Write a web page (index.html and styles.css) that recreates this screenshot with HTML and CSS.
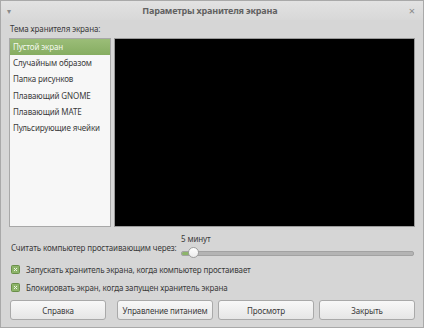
FILE: index.html
```html
<!DOCTYPE html>
<html lang="ru">
<head>
  <meta charset="UTF-8" />
  <title>Параметры хранителя экрана</title>
  <link rel="stylesheet" href="styles.css">
</head>
<body>
  <div class="window">
    <div class="titlebar">
      <span class="menu-arrow">&#9662;</span>
      <span class="title">Параметры хранителя экрана</span>
      <span class="close">&#215;</span>
    </div>

    <div class="content">
      <div class="theme-label">Тема хранителя экрана:</div>

      <div class="main">
        <ul class="themes">
          <li class="selected">Пустой экран</li>
          <li>Случайным образом</li>
          <li>Папка рисунков</li>
          <li>Плавающий GNOME</li>
          <li>Плавающий MATE</li>
          <li>Пульсирующие ячейки</li>
        </ul>
        <div class="preview"></div>
      </div>

      <div class="idle-row">
        <span class="idle-label">Считать компьютер простаивающим через:</span>
        <div class="slider">
          <span class="slider-value">5 минут</span>
          <div class="track">
            <div class="fill"></div>
            <div class="knob"></div>
          </div>
        </div>
      </div>

      <label class="check">
        <svg width="9" height="9" viewBox="0 0 9 9"><rect x="0.5" y="0.5" width="8" height="8" rx="1" fill="#8db46a" stroke="#6a8f4a"/><path d="M3 3 L6 6 M6 3 L3 6" stroke="#eef5e6" stroke-width="1"/></svg>
        Запускать хранитель экрана, когда компьютер простаивает
      </label>
      <label class="check">
        <svg width="9" height="9" viewBox="0 0 9 9"><rect x="0.5" y="0.5" width="8" height="8" rx="1" fill="#8db46a" stroke="#6a8f4a"/><path d="M3 3 L6 6 M6 3 L3 6" stroke="#eef5e6" stroke-width="1"/></svg>
        Блокировать экран, когда запущен хранитель экрана
      </label>

      <div class="buttons">
        <button class="first">Справка</button>
        <button>Управление питанием</button>
        <button>Просмотр</button>
        <button>Закрыть</button>
      </div>
    </div>
  </div>
</body>
</html>
```

FILE: styles.css
```css
body {
  margin: 0;
  font-family: "Noto Sans", "Open Sans", sans-serif;
  font-size: 8px;
  letter-spacing: -0.12px;
  color: #3a3a3a;
}
.window {
  width: 424px;
  height: 328px;
  box-sizing: border-box;
  border: 1px solid #a9a9a9;
  background: #d6d6d6;
}
.titlebar {
  height: 19px;
  display: flex;
  align-items: center;
  justify-content: space-between;
  padding: 0 8px 0 6px;
  background: linear-gradient(#e2e2e2, #d8d8d8);
}
.menu-arrow {
  font-size: 8px;
  color: #8a8a8a;
}
.title {
  font-size: 9px;
  font-weight: bold;
  letter-spacing: -0.2px;
  color: #626262;
}
.close {
  font-size: 11px;
  color: #8a8a8a;
}
.content {
  padding: 0 8px 0 8px;
}
.theme-label {
  height: 17px;
  line-height: 16px;
  padding-top: 1px;
  padding-left: 1px;
}
.main {
  display: flex;
  gap: 3px;
  height: 189px;
}
.themes {
  list-style: none;
  margin: 0;
  padding: 0;
  width: 102px;
  box-sizing: border-box;
  border: 1px solid #a8a8a8;
  background: #f7f7f7;
}
.themes li {
  height: 16.2px;
  line-height: 16px;
  padding-left: 3px;
  white-space: nowrap;
}
.themes li.selected {
  background: linear-gradient(#9bbd78, #86ad61);
  color: #f4f8ef;
}
.preview {
  flex: 1;
  background: #000;
  border: 1px solid #9a9a9a;
}
.idle-row {
  display: flex;
  height: 33px;
  align-items: flex-end;
}
.idle-label {
  width: 170px;
  padding-left: 2px;
  padding-bottom: 7px;
  white-space: nowrap;
}
.slider {
  flex: 1;
  display: flex;
  flex-direction: column;
  padding-bottom: 4px;
}
.slider-value {
  line-height: 12px;
  padding-left: 0;
}
.track {
  position: relative;
  height: 3px;
  margin-top: 6px;
  margin-right: 1px;
  background: #b4b4b4;
  border: 1px solid #a2a2a2;
  border-radius: 2px;
}
.fill {
  width: 10px;
  height: 3px;
  background: #8db46a;
  border-radius: 2px;
}
.knob {
  position: absolute;
  left: 6px;
  top: -5px;
  width: 11px;
  height: 11px;
  box-sizing: border-box;
  border-radius: 50%;
  background: linear-gradient(#ffffff, #ececec);
  border: 1px solid #9e9e9e;
}
.check {
  display: flex;
  align-items: center;
  gap: 6px;
  height: 18px;
  padding-left: 2px;
}
.buttons {
  display: flex;
  gap: 5px;
  margin-top: 4px;
  padding-left: 1px;
}
.buttons button {
  width: 96px;
  height: 20px;
  padding: 0;
  font-family: inherit;
  font-size: 8px;
  letter-spacing: -0.12px;
  color: #3a3a3a;
  background: linear-gradient(#f8f8f8, #e6e6e6);
  border: 1px solid #a9a9a9;
  border-radius: 3px;
  white-space: nowrap;
}
.buttons button.first {
  margin-right: 6px;
}
```
